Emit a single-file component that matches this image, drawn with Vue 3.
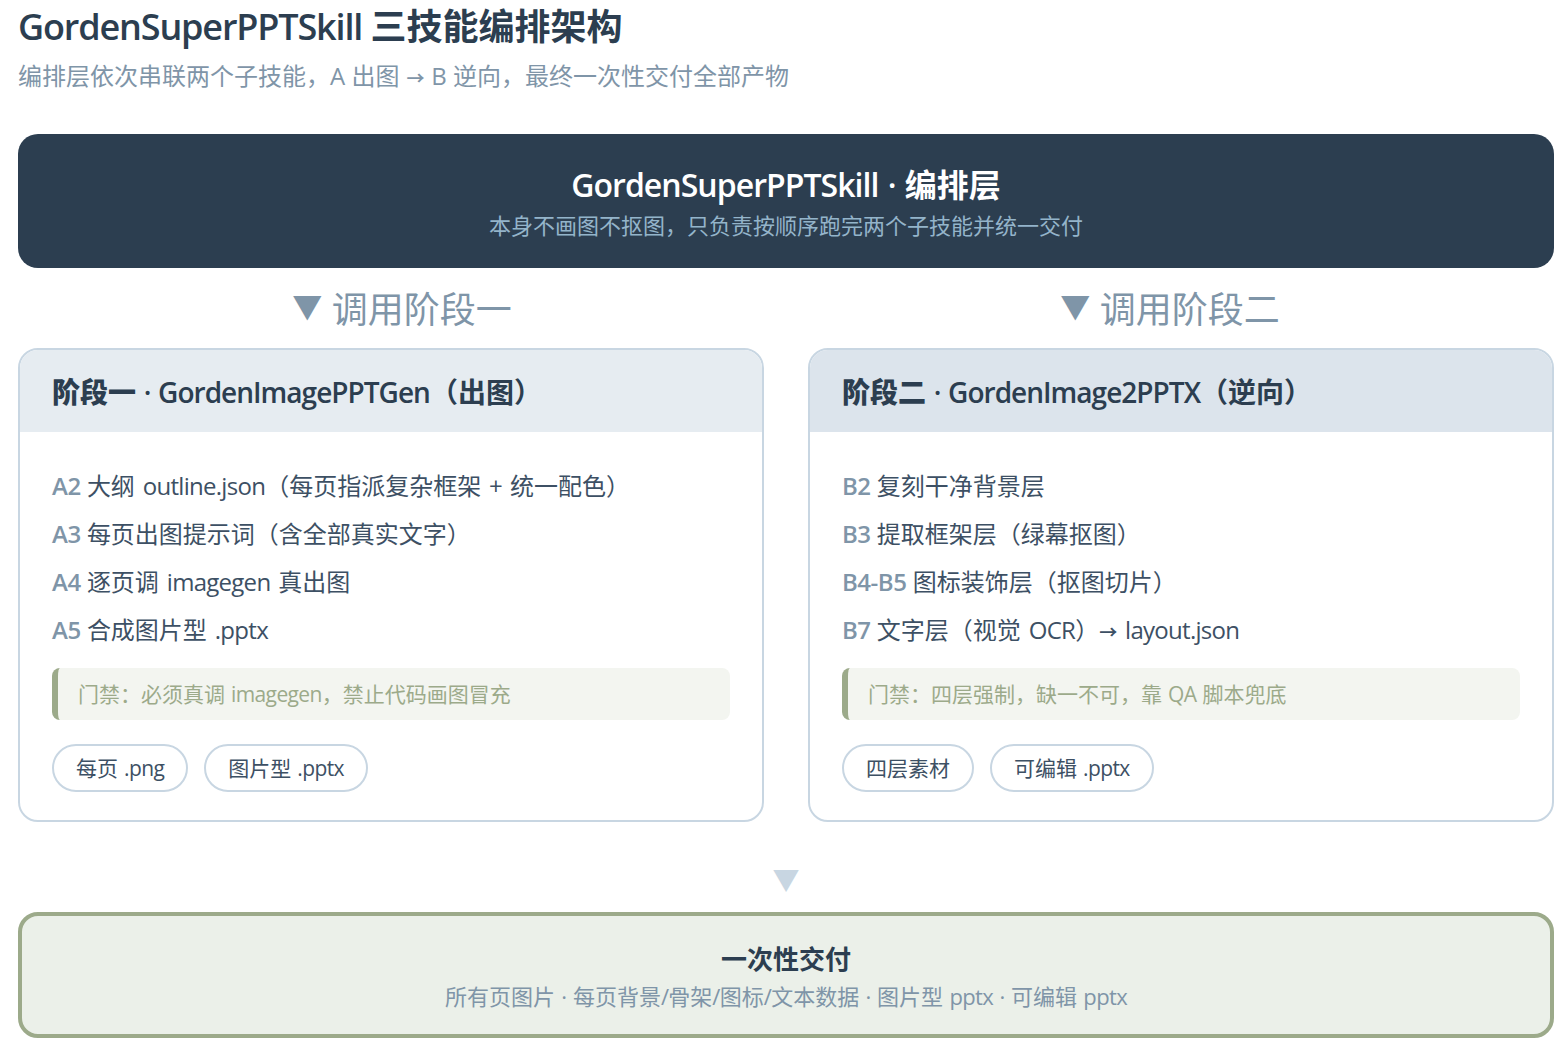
<script setup>
const seg = (text) => text.split(/(→|[\u0020-\u00ff]+)/).filter(Boolean).map((t) => ({
  t,
  c: t === '→' ? 'arr' : /^[\u0020-\u00ff]+$/.test(t) ? 'lat' : '',
}))
const stages = [
  {
    title: '阶段一', name: ' · GordenImagePPTGen（出图）', head: 'a',
    rows: [['A2', '大纲 outline.json（每页指派复杂框架 + 统一配色）'], ['A3', '每页出图提示词（含全部真实文字）'], ['A4', '逐页调 imagegen 真出图'], ['A5', '合成图片型 .pptx']],
    gate: '门禁：必须真调 imagegen，禁止代码画图冒充',
    tags: ['每页 .png', '图片型 .pptx'],
  },
  {
    title: '阶段二', name: ' · GordenImage2PPTX（逆向）', head: 'b',
    rows: [['B2', '复刻干净背景层'], ['B3', '提取框架层（绿幕抠图）'], ['B4-B5', '图标装饰层（抠图切片）'], ['B7', '文字层（视觉 OCR）→ layout.json']],
    gate: '门禁：四层强制，缺一不可，靠 QA 脚本兜底',
    tags: ['四层素材', '可编辑 .pptx'],
  },
]
const title = 'GordenSuperPPTSkill 三技能编排架构'
const sub = '编排层依次串联两个子技能，A 出图 → B 逆向，最终一次性交付全部产物'
const orch = 'GordenSuperPPTSkill · 编排层'
const finalS = '所有页图片 · 每页背景/骨架/图标/文本数据 · 图片型 pptx · 可编辑 pptx'
</script>

<template>
  <div class="page">
    <h1 class="title"><span v-for="(p, i) in seg(title)" :key="i" :class="p.c">{{ p.t }}</span></h1>
    <p class="sub"><span v-for="(p, i) in seg(sub)" :key="i" :class="p.c">{{ p.t }}</span></p>
    <section class="orch">
      <div class="orch-t"><span v-for="(p, i) in seg(orch)" :key="i" :class="p.c">{{ p.t }}</span></div>
      <div class="orch-s">本身不画图不抠图，只负责按顺序跑完两个子技能并统一交付</div>
    </section>
    <div class="calls">
      <div class="call"><span class="tri">▼</span> 调用阶段一</div>
      <div class="call"><span class="tri">▼</span> 调用阶段二</div>
    </div>
    <div class="grid">
      <article v-for="s in stages" :key="s.title" class="card">
        <header class="head" :class="s.head"><b>{{ s.title }}</b><span v-for="(p, i) in seg(s.name)" :key="i" :class="p.c">{{ p.t }}</span></header>
        <div class="body">
          <div v-for="r in s.rows" :key="r[0]" class="row"><span class="key">{{ r[0] }}</span> <span v-for="(p, i) in seg(r[1])" :key="i" :class="p.c">{{ p.t }}</span></div>
          <div class="gate"><span v-for="(p, i) in seg(s.gate)" :key="i" :class="p.c">{{ p.t }}</span></div>
          <div class="tags"><span v-for="t in s.tags" :key="t" class="tag"><span v-for="(p, i) in seg(t)" :key="i" :class="p.c">{{ p.t }}</span></span></div>
        </div>
      </article>
    </div>
    <div class="arrow">▼</div>
    <section class="final">
      <div class="final-t">一次性交付</div>
      <div class="final-s"><span v-for="(p, i) in seg(finalS)" :key="i" :class="p.c">{{ p.t }}</span></div>
    </section>
  </div>
</template>

<style>
body { margin: 0; background: #fff; }
</style>
<style scoped>
.page { width: 1536px; padding: 0 10px 0 18px; font-family: "Open Sans", "Noto Sans CJK SC", sans-serif; color: #2c3e50; }
.lat { letter-spacing: -0.03em; word-spacing: 0.06em; }
.arr { font-size: 0.75em; font-weight: 700; line-height: 1; }
.title { margin: 0; font-size: 36px; line-height: 54px; font-weight: 600; white-space: nowrap; }
.title .lat { word-spacing: 0; letter-spacing: -0.032em; }
.sub { margin: 0; font-size: 24px; line-height: 44px; color: #7f95a8; }
.orch { margin-top: 36px; height: 134px; padding-top: 4px; box-sizing: border-box; border-radius: 20px; background: #2c3e50; display: flex; flex-direction: column; align-items: center; justify-content: center; }
.orch-t { color: #fff; font-size: 32px; line-height: 44px; font-weight: 600; }
.orch-s { color: #94b4ca; font-size: 22px; line-height: 36px; }
.calls { display: flex; justify-content: space-around; height: 80px; }
.call { font-size: 36px; line-height: 84px; color: #7f95a8; }
.tri { font-size: 30px; line-height: 1; vertical-align: 5px; }
.grid { display: grid; grid-template-columns: 746px 746px; gap: 44px; }
.card { border: 2px solid #c8d6e2; border-radius: 20px; overflow: hidden; height: 474px; box-sizing: border-box; }
.head { height: 82px; padding-left: 32px; font-size: 28px; line-height: 84px; font-weight: 600; white-space: pre; }
.head .lat { letter-spacing: -0.035em; word-spacing: 0.05em; }
.head.a { background: #e6ecf1; }
.head.b { background: #dce4ec; }
.body { padding: 30px 32px; }
.row { font-size: 24px; line-height: 48px; color: #3d5064; }
.row .lat { word-spacing: 0.1em; }
.key { color: #7f95a8; font-weight: 600; letter-spacing: -0.02em; }
.gate { margin-top: 14px; height: 52px; padding-left: 20px; border-left: 6px solid #9caa8a; border-radius: 8px; background: #f3f5f0; color: #9caa8a; font-size: 21px; line-height: 52px; }
.tags { display: flex; gap: 16px; margin-top: 24px; }
.tag { height: 44px; padding: 0 22px; border: 2px solid #c8d6e2; border-radius: 24px; font-size: 21px; line-height: 44px; color: #3d5064; }
.arrow { margin-top: 30px; height: 60px; text-align: center; font-size: 27px; line-height: 56px; color: #c8d6e2; }
.final { height: 126px; box-sizing: border-box; border: 4px solid #9caa8a; border-radius: 20px; background: #ebf0e9; text-align: center; padding-top: 23px; }
.final-t { font-size: 26px; line-height: 40px; font-weight: 700; }
.final-s { font-size: 22px; line-height: 35px; color: #7f95a8; }
</style>
